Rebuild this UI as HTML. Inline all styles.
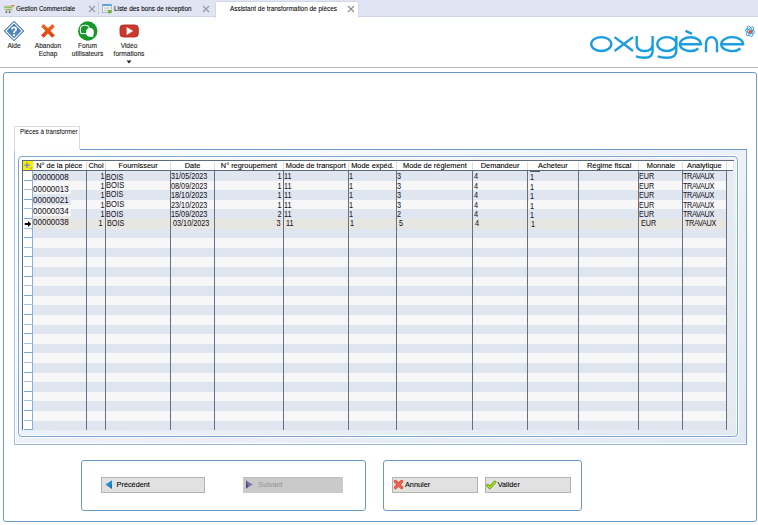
<!DOCTYPE html><html><head><meta charset="utf-8"><style>
html,body{margin:0;padding:0;}
body{width:758px;height:525px;overflow:hidden;position:relative;background:#fff;font-family:"Liberation Sans", sans-serif;color:#1a1a1a;}
div,span,svg{position:absolute;box-sizing:border-box;}
.t{white-space:nowrap;line-height:1;-webkit-text-stroke:0.1px currentColor;}
</style></head><body>
<div style="left:0px;top:0px;width:758px;height:17px;background:#e1e5f3;"></div>
<div style="left:0px;top:16px;width:758px;height:1px;background:#cdd4ea;"></div>
<div style="left:98px;top:2px;width:1px;height:13px;background:#c9cee0;"></div>
<svg style="left:0px;top:0px" width="16" height="16" viewBox="0 0 16 16"><path d="M4 6.2H12.6L11.6 10.6H5.4Z" fill="#e4e6ea" stroke="#a7abb3" stroke-width="0.7"/><path d="M5 7.3H11.6M5.6 9.3H11" stroke="#8cc43c" stroke-width="1.2"/><path d="M12.6 6.2L13 5.6" stroke="#a7abb3" stroke-width="0.7"/><path d="M11.6 5.6H14" stroke="#f47a1c" stroke-width="1.3" stroke-linecap="round"/><circle cx="6.4" cy="12.2" r="0.9" fill="#55585e"/><circle cx="9.6" cy="12.2" r="0.9" fill="#55585e"/></svg>
<span class="t" style="left:15.5px;top:4.8px;font-size:7.6px;transform:scaleX(0.81);transform-origin:left top;color:#000;-webkit-text-stroke:0.08px #000">Gestion Commerciale</span>
<svg style="left:88px;top:4.5px" width="8" height="8" viewBox="0 0 8 8"><path d="M1 1L7 7M7 1L1 7" stroke="#8a8a8a" stroke-width="1.1" opacity="0.85"/></svg>
<svg style="left:102px;top:4px" width="11" height="11" viewBox="0 0 11 11"><rect x="0.5" y="0.6" width="9" height="8" fill="#f6f2ea" stroke="#8fb0d4" stroke-width="0.8"/><rect x="0.5" y="0.4" width="9" height="1.5" fill="#3b9ae2"/><path d="M2 4H8M2 6.3H6" stroke="#a9adb5" stroke-width="0.7"/><circle cx="7.6" cy="7.6" r="1.8" fill="#62b61e"/></svg>
<span class="t" style="left:113.7px;top:4.8px;font-size:7.6px;transform:scaleX(0.835);transform-origin:left top;color:#000;-webkit-text-stroke:0.08px #000">Liste des bons de réception</span>
<svg style="left:202px;top:4.5px" width="8" height="8" viewBox="0 0 8 8"><path d="M1 1L7 7M7 1L1 7" stroke="#8a8a8a" stroke-width="1.1" opacity="0.85"/></svg>
<div style="left:215px;top:1px;width:144px;height:17px;background:#fff;border:1px solid #d3d8e8;border-bottom:none;border-radius:2px 2px 0 0;"></div>
<span class="t" style="left:230.3px;top:4.8px;font-size:7.6px;transform:scaleX(0.845);transform-origin:left top;color:#000;-webkit-text-stroke:0.08px #000">Assistant de transformation de pièces</span>
<svg style="left:347px;top:4.5px" width="8" height="8" viewBox="0 0 8 8"><path d="M1 1L7 7M7 1L1 7" stroke="#777" stroke-width="1.1" opacity="0.85"/></svg>
<div style="left:0px;top:67px;width:758px;height:1px;background:#b8b8b8;"></div>
<svg style="left:3px;top:20px" width="22" height="22" viewBox="0 0 22 22"><defs><linearGradient id="ag" x1="0" y1="0" x2="0" y2="1"><stop offset="0" stop-color="#3a74b8"/><stop offset="1" stop-color="#5b92cc"/></linearGradient></defs><path d="M11 1.2L20.8 11L11 20.8L1.2 11Z" fill="#3f78b8" stroke="#3a70ad" stroke-width="0.9" stroke-linejoin="round"/><path d="M11 2.9L19.1 11L11 19.1L2.9 11Z" fill="none" stroke="#fff" stroke-width="1.1"/><path d="M11 4.3L17.7 11L11 17.7L4.3 11Z" fill="url(#ag)"/><path d="M8.9 9.6Q8.9 7.4 11 7.4Q13.1 7.4 13.1 9.3Q13.1 10.4 12 11.1Q11 11.7 11 13.1" fill="none" stroke="#fff" stroke-width="1.8"/><rect x="10.1" y="14.2" width="1.9" height="1.9" fill="#fff"/></svg>
<span class="t" style="left:14px;top:42.5px;font-size:6.6px;;transform:translateX(-50%);transform-origin:center top">Aide</span>
<svg style="left:40px;top:23px" width="16" height="16" viewBox="0 0 16 16"><defs><linearGradient id="xg" x1="0" y1="0" x2="0" y2="1"><stop offset="0" stop-color="#f2641e"/><stop offset="1" stop-color="#e0400e"/></linearGradient></defs><path d="M2.4 2.3L13.5 13.5M13.5 2.3L2.4 13.5" stroke="url(#xg)" stroke-width="3.6" stroke-linecap="butt"/></svg>
<span class="t" style="left:48px;top:42.5px;font-size:6.6px;;transform:translateX(-50%);transform-origin:center top">Abandon</span>
<span class="t" style="left:48px;top:51.2px;font-size:6.6px;;transform:translateX(-50%);transform-origin:center top">Echap</span>
<svg style="left:77px;top:21px" width="21" height="21" viewBox="0 0 21 21"><circle cx="10.75" cy="10" r="9.7" fill="#15982a"/><path d="M4.2 12.3Q3.3 11.3 3.3 8.2Q3.3 4.3 7.9 4.3Q12.2 4.3 12.3 7.6" fill="none" stroke="#fff" stroke-width="1.1"/><path d="M3.6 12.6H9.4" stroke="#fff" stroke-width="1"/><ellipse cx="13" cy="11.4" rx="3.9" ry="4.3" fill="#fff"/><path d="M14.8 14.6L16.9 15.9L13 15.7Z" fill="#fff"/></svg>
<span class="t" style="left:87.5px;top:42.5px;font-size:6.6px;;transform:translateX(-50%);transform-origin:center top">Forum</span>
<span class="t" style="left:87.5px;top:51.2px;font-size:6.6px;;transform:translateX(-50%);transform-origin:center top">utilisateurs</span>
<svg style="left:119px;top:24px" width="20" height="14" viewBox="0 0 20 14"><rect x="1" y="1" width="18.3" height="12" rx="3.3" fill="#c83a2e" stroke="#b52a20" stroke-width="0.9"/><path d="M7.6 3L14.1 7L7.6 11Z" fill="#fff"/></svg>
<span class="t" style="left:129px;top:42.5px;font-size:6.6px;;transform:translateX(-50%);transform-origin:center top">Vidéo</span>
<span class="t" style="left:129px;top:51.2px;font-size:6.6px;;transform:translateX(-50%);transform-origin:center top">formations</span>
<svg style="left:126px;top:60px" width="6" height="4" viewBox="0 0 6 4"><path d="M0.5 0.5H5.5L3 3.5Z" fill="#222"/></svg>
<svg style="left:585px;top:25px" width="173" height="40" viewBox="585 25 173 40">
<g fill="none" stroke="#1b9de0" stroke-width="2.4">
<ellipse cx="601.25" cy="44.05" rx="10.05" ry="6.95"/>
<path d="M614.6 37.1L633 51M633 37.1L614.6 51"/>
<path d="M636.7 35.9V44Q636.7 51 644.65 51Q652.6 51 652.6 44V35.9M652.6 44V51Q652.6 57.7 644.65 57.7Q639.5 57.7 636 56.3"/>
<ellipse cx="666.8" cy="44.05" rx="9.5" ry="6.95"/>
<path d="M676.3 35.9V51Q676.3 57.7 667 57.7Q661 57.7 657.7 56.3"/>
<path d="M679.9 44.2H700.8A10.45 6.95 0 0 0 679.9 44.05A10.45 6.95 0 0 0 698.35 48.5"/>
<path d="M685.5 30.8L692 33.8"/>
<path d="M706 52.2V44A5.5 6.9 0 0 1 717 44V52.2"/>
<path d="M721.2 44.2H743.1A10.95 6.95 0 0 0 721.2 44.05A10.95 6.95 0 0 0 740.6 48.5"/>
</g>
<g fill="none" stroke="#3b9fe6" stroke-width="0.9">
<ellipse cx="750" cy="31.3" rx="5.6" ry="2.3" transform="rotate(70 750 31.3)"/>
<ellipse cx="750" cy="31.3" rx="5.4" ry="2.2" transform="rotate(125 750 31.3)"/>
<ellipse cx="750" cy="31.3" rx="4.8" ry="2.0" transform="rotate(15 750 31.3)"/>
</g>
<circle cx="750.4" cy="31.8" r="1.7" fill="#f54a10"/>
</svg>
<div style="left:3px;top:72px;width:754px;height:450px;border:1px solid #6b9bc9;border-radius:3px;"></div>
<div style="left:14px;top:126px;width:66px;height:25px;background:#fff;border:1px solid #dadada;border-bottom:none;"></div>
<span class="t" style="left:20.0px;top:127.6px;font-size:7.8px;transform:scaleX(0.8);transform-origin:left top;color:#000;-webkit-text-stroke:0.02px #000">Pièces à transformer</span>
<div style="left:14px;top:149px;width:733px;height:296px;border:1px solid #92b6da;border-left-color:#a3c1de;border-right-color:#7aa6d2;border-top:none;border-radius:0 2px 0 0;background:linear-gradient(to bottom right,#ffffff 0%,#eef2f8 45%,#e2e9f3 100%);box-shadow:inset 1px 0 0 #fff, inset 0 -1px 0 #fff;"></div>
<div style="left:80px;top:149px;width:667px;height:1px;background:#6b9bc9;"></div>
<div style="left:14px;top:149px;width:1px;height:2px;background:#d6d9de;"></div>
<div style="left:18px;top:156px;width:720px;height:281px;border:1px solid #7aa6d2;border-radius:4px;background:transparent;box-shadow:0 0 0 1px rgba(255,255,255,0.9), inset 0 0 0 1px rgba(255,255,255,0.9);"></div>
<div style="left:22px;top:160px;width:712px;height:271px;background:#e8ebf0;"></div>
<div style="left:22px;top:160px;width:711px;height:11px;background:#fff;"></div>
<div style="left:22px;top:160px;width:712px;height:1px;background:#5d6c7c;"></div>
<div style="left:22px;top:160px;width:1px;height:270px;background:#5d6c7c;"></div>
<div style="left:22px;top:170px;width:711px;height:1px;background:#5d6c7c;"></div>
<div style="left:23px;top:161px;width:10px;height:9px;background:#f5f000;"></div>
<svg style="left:23px;top:161px" width="10" height="9" viewBox="0 0 10 9"><path d="M4 1.5V7M1.3 4.2H6.7" stroke="#8a90b8" stroke-width="1.6"/><path d="M7 6.5L8 7.6L9 6.5" stroke="#6a70a0" stroke-width="0.8" fill="none"/></svg>
<div style="left:33px;top:171px;width:700px;height:10px;background:#e0e6ef;"></div>
<div style="left:33px;top:181px;width:700px;height:9px;background:#f8f7f7;"></div>
<div style="left:33px;top:190px;width:700px;height:10px;background:#e0e6ef;"></div>
<div style="left:33px;top:200px;width:700px;height:9px;background:#f8f7f7;"></div>
<div style="left:33px;top:209px;width:700px;height:10px;background:#e0e6ef;"></div>
<div style="left:33px;top:219px;width:700px;height:10px;background:#e8e6e1;"></div>
<div style="left:33px;top:229px;width:700px;height:9px;background:#e0e6ef;"></div>
<div style="left:33px;top:238px;width:700px;height:10px;background:#f8f7f7;"></div>
<div style="left:33px;top:248px;width:700px;height:9px;background:#e0e6ef;"></div>
<div style="left:33px;top:257px;width:700px;height:10px;background:#f8f7f7;"></div>
<div style="left:33px;top:267px;width:700px;height:10px;background:#e0e6ef;"></div>
<div style="left:33px;top:277px;width:700px;height:9px;background:#f8f7f7;"></div>
<div style="left:33px;top:286px;width:700px;height:10px;background:#e0e6ef;"></div>
<div style="left:33px;top:296px;width:700px;height:9px;background:#f8f7f7;"></div>
<div style="left:33px;top:305px;width:700px;height:10px;background:#e0e6ef;"></div>
<div style="left:33px;top:315px;width:700px;height:10px;background:#f8f7f7;"></div>
<div style="left:33px;top:325px;width:700px;height:9px;background:#e0e6ef;"></div>
<div style="left:33px;top:334px;width:700px;height:10px;background:#f8f7f7;"></div>
<div style="left:33px;top:344px;width:700px;height:9px;background:#e0e6ef;"></div>
<div style="left:33px;top:353px;width:700px;height:10px;background:#f8f7f7;"></div>
<div style="left:33px;top:363px;width:700px;height:10px;background:#e0e6ef;"></div>
<div style="left:33px;top:373px;width:700px;height:9px;background:#f8f7f7;"></div>
<div style="left:33px;top:382px;width:700px;height:10px;background:#e0e6ef;"></div>
<div style="left:33px;top:392px;width:700px;height:9px;background:#f8f7f7;"></div>
<div style="left:33px;top:401px;width:700px;height:10px;background:#e0e6ef;"></div>
<div style="left:33px;top:411px;width:700px;height:10px;background:#f8f7f7;"></div>
<div style="left:33px;top:421px;width:700px;height:9px;background:#e0e6ef;"></div>
<div style="left:23px;top:171px;width:10px;height:259px;background:#fff;"></div>
<div style="left:24px;top:180px;width:9px;height:1px;background:#7aa6d3;"></div>
<div style="left:24px;top:189px;width:9px;height:1px;background:#a3c0de;"></div>
<div style="left:24px;top:199px;width:9px;height:1px;background:#7aa6d3;"></div>
<div style="left:24px;top:208px;width:9px;height:1px;background:#a3c0de;"></div>
<div style="left:24px;top:218px;width:9px;height:1px;background:#7aa6d3;"></div>
<div style="left:24px;top:228px;width:9px;height:1px;background:#a3c0de;"></div>
<div style="left:24px;top:237px;width:9px;height:1px;background:#7aa6d3;"></div>
<div style="left:24px;top:247px;width:9px;height:1px;background:#a3c0de;"></div>
<div style="left:24px;top:256px;width:9px;height:1px;background:#7aa6d3;"></div>
<div style="left:24px;top:266px;width:9px;height:1px;background:#a3c0de;"></div>
<div style="left:24px;top:276px;width:9px;height:1px;background:#7aa6d3;"></div>
<div style="left:24px;top:285px;width:9px;height:1px;background:#a3c0de;"></div>
<div style="left:24px;top:295px;width:9px;height:1px;background:#7aa6d3;"></div>
<div style="left:24px;top:304px;width:9px;height:1px;background:#a3c0de;"></div>
<div style="left:24px;top:314px;width:9px;height:1px;background:#7aa6d3;"></div>
<div style="left:24px;top:324px;width:9px;height:1px;background:#a3c0de;"></div>
<div style="left:24px;top:333px;width:9px;height:1px;background:#7aa6d3;"></div>
<div style="left:24px;top:343px;width:9px;height:1px;background:#a3c0de;"></div>
<div style="left:24px;top:352px;width:9px;height:1px;background:#7aa6d3;"></div>
<div style="left:24px;top:362px;width:9px;height:1px;background:#a3c0de;"></div>
<div style="left:24px;top:372px;width:9px;height:1px;background:#7aa6d3;"></div>
<div style="left:24px;top:381px;width:9px;height:1px;background:#a3c0de;"></div>
<div style="left:24px;top:391px;width:9px;height:1px;background:#7aa6d3;"></div>
<div style="left:24px;top:400px;width:9px;height:1px;background:#a3c0de;"></div>
<div style="left:24px;top:410px;width:9px;height:1px;background:#7aa6d3;"></div>
<div style="left:24px;top:420px;width:9px;height:1px;background:#a3c0de;"></div>
<div style="left:24px;top:429px;width:9px;height:1px;background:#7aa6d3;"></div>
<div style="left:32px;top:171px;width:1px;height:259px;background:#8cb1d9;"></div>
<svg style="left:23px;top:219px" width="10" height="10" viewBox="0 0 10 10"><path d="M1.8 4H5V2L8.3 5L5 8V6H1.8Z" fill="#000"/></svg>
<div style="left:86px;top:171px;width:1px;height:259px;background:#627282;"></div>
<div style="left:86px;top:162px;width:1px;height:8px;background:#dadde2;"></div>
<div style="left:105px;top:171px;width:1px;height:259px;background:#627282;"></div>
<div style="left:105px;top:162px;width:1px;height:8px;background:#dadde2;"></div>
<div style="left:170px;top:171px;width:1px;height:259px;background:#627282;"></div>
<div style="left:170px;top:162px;width:1px;height:8px;background:#dadde2;"></div>
<div style="left:214px;top:171px;width:1px;height:259px;background:#627282;"></div>
<div style="left:214px;top:162px;width:1px;height:8px;background:#dadde2;"></div>
<div style="left:283px;top:171px;width:1px;height:259px;background:#627282;"></div>
<div style="left:283px;top:162px;width:1px;height:8px;background:#dadde2;"></div>
<div style="left:348px;top:171px;width:1px;height:259px;background:#627282;"></div>
<div style="left:348px;top:162px;width:1px;height:8px;background:#dadde2;"></div>
<div style="left:396px;top:171px;width:1px;height:259px;background:#627282;"></div>
<div style="left:396px;top:162px;width:1px;height:8px;background:#dadde2;"></div>
<div style="left:472px;top:171px;width:1px;height:259px;background:#627282;"></div>
<div style="left:472px;top:162px;width:1px;height:8px;background:#dadde2;"></div>
<div style="left:527px;top:171px;width:1px;height:259px;background:#627282;"></div>
<div style="left:527px;top:162px;width:1px;height:8px;background:#dadde2;"></div>
<div style="left:578px;top:171px;width:1px;height:259px;background:#627282;"></div>
<div style="left:578px;top:162px;width:1px;height:8px;background:#dadde2;"></div>
<div style="left:638px;top:171px;width:1px;height:259px;background:#627282;"></div>
<div style="left:638px;top:162px;width:1px;height:8px;background:#dadde2;"></div>
<div style="left:682px;top:171px;width:1px;height:259px;background:#627282;"></div>
<div style="left:682px;top:162px;width:1px;height:8px;background:#dadde2;"></div>
<div style="left:726px;top:171px;width:1px;height:259px;background:#627282;"></div>
<div style="left:726px;top:162px;width:1px;height:8px;background:#dadde2;"></div>
<div style="left:727px;top:171px;width:6px;height:259px;background:#e6eaf1;"></div>
<span class="t" style="left:59.3px;top:162.3px;font-size:7.4px;color:#000;transform:translateX(-50%);transform-origin:center top">N° de la pièce</span>
<span class="t" style="left:96px;top:162.3px;font-size:7.4px;color:#000;transform:translateX(-50%);transform-origin:center top">Choi</span>
<span class="t" style="left:138.1px;top:162.3px;font-size:7.4px;color:#000;transform:translateX(-50%);transform-origin:center top">Fournisseur</span>
<span class="t" style="left:192.5px;top:162.3px;font-size:7.4px;color:#000;transform:translateX(-50%);transform-origin:center top">Date</span>
<span class="t" style="left:249px;top:162.3px;font-size:7.4px;color:#000;transform:translateX(-50%);transform-origin:center top">N° regroupement</span>
<span class="t" style="left:315.8px;top:162.3px;font-size:7.4px;color:#000;transform:translateX(-50%);transform-origin:center top">Mode de transport</span>
<span class="t" style="left:372.5px;top:162.3px;font-size:7.4px;color:#000;transform:translateX(-50%);transform-origin:center top">Mode expéd.</span>
<span class="t" style="left:434.9px;top:162.3px;font-size:7.4px;color:#000;transform:translateX(-50%);transform-origin:center top">Mode de règlement</span>
<span class="t" style="left:500.1px;top:162.3px;font-size:7.4px;color:#000;transform:translateX(-50%);transform-origin:center top">Demandeur</span>
<span class="t" style="left:552.9px;top:162.3px;font-size:7.4px;color:#000;transform:translateX(-50%);transform-origin:center top">Acheteur</span>
<span class="t" style="left:609.2px;top:162.3px;font-size:7.4px;color:#000;transform:translateX(-50%);transform-origin:center top">Régime fiscal</span>
<span class="t" style="left:661px;top:162.3px;font-size:7.4px;color:#000;transform:translateX(-50%);transform-origin:center top">Monnaie</span>
<span class="t" style="left:704.3px;top:162.3px;font-size:7.4px;color:#000;transform:translateX(-50%);transform-origin:center top">Analytique</span>
<div style="left:33px;top:182px;width:38px;height:12px;background:#f8f7f7;"></div>
<div style="left:33px;top:194px;width:38px;height:11px;background:#e0e6ef;"></div>
<div style="left:33px;top:205px;width:38px;height:11px;background:#f8f7f7;"></div>
<div style="left:33px;top:216px;width:38px;height:11px;background:#e8e6e1;"></div>
<span class="t" style="left:33.2px;top:172.23px;font-size:9.8px;color:#1a1424;-webkit-text-stroke:0.05px currentColor;transform:scaleX(0.82);transform-origin:left top;">00000008</span>
<span class="t" style="left:33.2px;top:184.03px;font-size:9.8px;color:#1a1424;-webkit-text-stroke:0.05px currentColor;transform:scaleX(0.82);transform-origin:left top;">00000013</span>
<span class="t" style="left:33.2px;top:194.63px;font-size:9.8px;color:#1a1424;-webkit-text-stroke:0.05px currentColor;transform:scaleX(0.82);transform-origin:left top;">00000021</span>
<span class="t" style="left:33.2px;top:206.13px;font-size:9.8px;color:#1a1424;-webkit-text-stroke:0.05px currentColor;transform:scaleX(0.82);transform-origin:left top;">00000034</span>
<span class="t" style="left:33.2px;top:217.13px;font-size:9.8px;color:#1a1424;-webkit-text-stroke:0.05px currentColor;transform:scaleX(0.82);transform-origin:left top;">00000038</span>
<span class="t" style="right:653.4px;top:172.26px;font-size:8.4px;color:#1a1424;-webkit-text-stroke:0.05px currentColor;transform:scaleX(0.87);transform-origin:right top;">1</span>
<span class="t" style="left:106.3px;top:172.76px;font-size:8.4px;color:#1a1424;-webkit-text-stroke:0.05px currentColor;transform:scaleX(0.86);transform-origin:left top;">BOIS</span>
<span class="t" style="left:171px;top:172.26px;font-size:8.4px;color:#1a1424;-webkit-text-stroke:0.05px currentColor;transform:scaleX(0.868);transform-origin:left top;">31/05/2023</span>
<span class="t" style="right:476.0px;top:172.26px;font-size:8.4px;color:#1a1424;-webkit-text-stroke:0.05px currentColor;transform:scaleX(0.87);transform-origin:right top;">1</span>
<span class="t" style="left:284.0px;top:172.26px;font-size:8.4px;color:#1a1424;-webkit-text-stroke:0.05px currentColor;transform:scaleX(0.87);transform-origin:left top;">11</span>
<span class="t" style="left:348.6px;top:172.26px;font-size:8.4px;color:#1a1424;-webkit-text-stroke:0.05px currentColor;transform:scaleX(0.87);transform-origin:left top;">1</span>
<span class="t" style="left:397.4px;top:172.26px;font-size:8.4px;color:#1a1424;-webkit-text-stroke:0.05px currentColor;transform:scaleX(0.87);transform-origin:left top;">3</span>
<span class="t" style="left:473.6px;top:172.26px;font-size:8.4px;color:#1a1424;-webkit-text-stroke:0.05px currentColor;transform:scaleX(0.87);transform-origin:left top;">4</span>
<span class="t" style="left:529.6px;top:173.06px;font-size:8.4px;color:#1a1424;-webkit-text-stroke:0.05px currentColor;transform:scaleX(0.87);transform-origin:left top;">1</span>
<span class="t" style="left:639px;top:172.26px;font-size:8.4px;color:#1a1424;-webkit-text-stroke:0.05px currentColor;transform:scaleX(0.86);transform-origin:left top;">EUR</span>
<span class="t" style="left:683px;top:172.26px;font-size:8.4px;color:#1a1424;-webkit-text-stroke:0.05px currentColor;transform:scaleX(0.87);transform-origin:left top;letter-spacing:-0.4px;">TRAVAUX</span>
<span class="t" style="right:653.4px;top:181.96px;font-size:8.4px;color:#1a1424;-webkit-text-stroke:0.05px currentColor;transform:scaleX(0.87);transform-origin:right top;">1</span>
<span class="t" style="left:106.3px;top:180.96px;font-size:9.0px;color:#1a1424;-webkit-text-stroke:0.05px currentColor;transform:scaleX(0.85);transform-origin:left top;">BOIS</span>
<span class="t" style="left:171px;top:181.96px;font-size:8.4px;color:#1a1424;-webkit-text-stroke:0.05px currentColor;transform:scaleX(0.868);transform-origin:left top;">08/09/2023</span>
<span class="t" style="right:476.0px;top:181.96px;font-size:8.4px;color:#1a1424;-webkit-text-stroke:0.05px currentColor;transform:scaleX(0.87);transform-origin:right top;">1</span>
<span class="t" style="left:284.0px;top:181.96px;font-size:8.4px;color:#1a1424;-webkit-text-stroke:0.05px currentColor;transform:scaleX(0.87);transform-origin:left top;">11</span>
<span class="t" style="left:348.6px;top:181.96px;font-size:8.4px;color:#1a1424;-webkit-text-stroke:0.05px currentColor;transform:scaleX(0.87);transform-origin:left top;">1</span>
<span class="t" style="left:397.4px;top:181.96px;font-size:8.4px;color:#1a1424;-webkit-text-stroke:0.05px currentColor;transform:scaleX(0.87);transform-origin:left top;">3</span>
<span class="t" style="left:473.6px;top:181.96px;font-size:8.4px;color:#1a1424;-webkit-text-stroke:0.05px currentColor;transform:scaleX(0.87);transform-origin:left top;">4</span>
<span class="t" style="left:529.6px;top:182.76px;font-size:8.4px;color:#1a1424;-webkit-text-stroke:0.05px currentColor;transform:scaleX(0.87);transform-origin:left top;">1</span>
<span class="t" style="left:639px;top:181.96px;font-size:8.4px;color:#1a1424;-webkit-text-stroke:0.05px currentColor;transform:scaleX(0.86);transform-origin:left top;">EUR</span>
<span class="t" style="left:683px;top:181.96px;font-size:8.4px;color:#1a1424;-webkit-text-stroke:0.05px currentColor;transform:scaleX(0.87);transform-origin:left top;letter-spacing:-0.4px;">TRAVAUX</span>
<span class="t" style="right:653.4px;top:191.46px;font-size:8.4px;color:#1a1424;-webkit-text-stroke:0.05px currentColor;transform:scaleX(0.87);transform-origin:right top;">1</span>
<span class="t" style="left:106.3px;top:190.46px;font-size:8.4px;color:#1a1424;-webkit-text-stroke:0.05px currentColor;transform:scaleX(0.86);transform-origin:left top;">BOIS</span>
<span class="t" style="left:171px;top:191.46px;font-size:8.4px;color:#1a1424;-webkit-text-stroke:0.05px currentColor;transform:scaleX(0.868);transform-origin:left top;">18/10/2023</span>
<span class="t" style="right:476.0px;top:191.46px;font-size:8.4px;color:#1a1424;-webkit-text-stroke:0.05px currentColor;transform:scaleX(0.87);transform-origin:right top;">1</span>
<span class="t" style="left:284.0px;top:191.46px;font-size:8.4px;color:#1a1424;-webkit-text-stroke:0.05px currentColor;transform:scaleX(0.87);transform-origin:left top;">11</span>
<span class="t" style="left:348.6px;top:191.46px;font-size:8.4px;color:#1a1424;-webkit-text-stroke:0.05px currentColor;transform:scaleX(0.87);transform-origin:left top;">1</span>
<span class="t" style="left:397.4px;top:191.46px;font-size:8.4px;color:#1a1424;-webkit-text-stroke:0.05px currentColor;transform:scaleX(0.87);transform-origin:left top;">3</span>
<span class="t" style="left:473.6px;top:191.46px;font-size:8.4px;color:#1a1424;-webkit-text-stroke:0.05px currentColor;transform:scaleX(0.87);transform-origin:left top;">4</span>
<span class="t" style="left:529.6px;top:192.26px;font-size:8.4px;color:#1a1424;-webkit-text-stroke:0.05px currentColor;transform:scaleX(0.87);transform-origin:left top;">1</span>
<span class="t" style="left:639px;top:191.46px;font-size:8.4px;color:#1a1424;-webkit-text-stroke:0.05px currentColor;transform:scaleX(0.86);transform-origin:left top;">EUR</span>
<span class="t" style="left:683px;top:191.46px;font-size:8.4px;color:#1a1424;-webkit-text-stroke:0.05px currentColor;transform:scaleX(0.87);transform-origin:left top;letter-spacing:-0.4px;">TRAVAUX</span>
<span class="t" style="right:653.4px;top:200.96px;font-size:8.4px;color:#1a1424;-webkit-text-stroke:0.05px currentColor;transform:scaleX(0.87);transform-origin:right top;">1</span>
<span class="t" style="left:106.3px;top:199.76px;font-size:9.0px;color:#1a1424;-webkit-text-stroke:0.05px currentColor;transform:scaleX(0.85);transform-origin:left top;">BOIS</span>
<span class="t" style="left:171px;top:200.96px;font-size:8.4px;color:#1a1424;-webkit-text-stroke:0.05px currentColor;transform:scaleX(0.868);transform-origin:left top;">23/10/2023</span>
<span class="t" style="right:476.0px;top:200.96px;font-size:8.4px;color:#1a1424;-webkit-text-stroke:0.05px currentColor;transform:scaleX(0.87);transform-origin:right top;">1</span>
<span class="t" style="left:284.0px;top:200.96px;font-size:8.4px;color:#1a1424;-webkit-text-stroke:0.05px currentColor;transform:scaleX(0.87);transform-origin:left top;">11</span>
<span class="t" style="left:348.6px;top:200.96px;font-size:8.4px;color:#1a1424;-webkit-text-stroke:0.05px currentColor;transform:scaleX(0.87);transform-origin:left top;">1</span>
<span class="t" style="left:397.4px;top:200.96px;font-size:8.4px;color:#1a1424;-webkit-text-stroke:0.05px currentColor;transform:scaleX(0.87);transform-origin:left top;">3</span>
<span class="t" style="left:473.6px;top:200.96px;font-size:8.4px;color:#1a1424;-webkit-text-stroke:0.05px currentColor;transform:scaleX(0.87);transform-origin:left top;">4</span>
<span class="t" style="left:529.6px;top:201.76px;font-size:8.4px;color:#1a1424;-webkit-text-stroke:0.05px currentColor;transform:scaleX(0.87);transform-origin:left top;">1</span>
<span class="t" style="left:639px;top:200.96px;font-size:8.4px;color:#1a1424;-webkit-text-stroke:0.05px currentColor;transform:scaleX(0.86);transform-origin:left top;">EUR</span>
<span class="t" style="left:683px;top:200.96px;font-size:8.4px;color:#1a1424;-webkit-text-stroke:0.05px currentColor;transform:scaleX(0.87);transform-origin:left top;letter-spacing:-0.4px;">TRAVAUX</span>
<span class="t" style="right:653.4px;top:210.36px;font-size:8.4px;color:#1a1424;-webkit-text-stroke:0.05px currentColor;transform:scaleX(0.87);transform-origin:right top;">1</span>
<span class="t" style="left:106.3px;top:209.96px;font-size:8.4px;color:#1a1424;-webkit-text-stroke:0.05px currentColor;transform:scaleX(0.86);transform-origin:left top;">BOIS</span>
<span class="t" style="left:171px;top:210.36px;font-size:8.4px;color:#1a1424;-webkit-text-stroke:0.05px currentColor;transform:scaleX(0.868);transform-origin:left top;">15/09/2023</span>
<span class="t" style="right:476.0px;top:210.36px;font-size:8.4px;color:#1a1424;-webkit-text-stroke:0.05px currentColor;transform:scaleX(0.87);transform-origin:right top;">2</span>
<span class="t" style="left:284.0px;top:210.36px;font-size:8.4px;color:#1a1424;-webkit-text-stroke:0.05px currentColor;transform:scaleX(0.87);transform-origin:left top;">11</span>
<span class="t" style="left:348.6px;top:210.36px;font-size:8.4px;color:#1a1424;-webkit-text-stroke:0.05px currentColor;transform:scaleX(0.87);transform-origin:left top;">1</span>
<span class="t" style="left:397.4px;top:210.36px;font-size:8.4px;color:#1a1424;-webkit-text-stroke:0.05px currentColor;transform:scaleX(0.87);transform-origin:left top;">2</span>
<span class="t" style="left:473.6px;top:210.36px;font-size:8.4px;color:#1a1424;-webkit-text-stroke:0.05px currentColor;transform:scaleX(0.87);transform-origin:left top;">4</span>
<span class="t" style="left:529.6px;top:211.16px;font-size:8.4px;color:#1a1424;-webkit-text-stroke:0.05px currentColor;transform:scaleX(0.87);transform-origin:left top;">1</span>
<span class="t" style="left:639px;top:210.36px;font-size:8.4px;color:#1a1424;-webkit-text-stroke:0.05px currentColor;transform:scaleX(0.86);transform-origin:left top;">EUR</span>
<span class="t" style="left:683px;top:210.36px;font-size:8.4px;color:#1a1424;-webkit-text-stroke:0.05px currentColor;transform:scaleX(0.87);transform-origin:left top;letter-spacing:-0.4px;">TRAVAUX</span>
<span class="t" style="right:655.1px;top:219.46px;font-size:8.4px;color:#1a1424;-webkit-text-stroke:0.05px currentColor;transform:scaleX(0.87);transform-origin:right top;">1</span>
<span class="t" style="left:106.98px;top:218.86px;font-size:8.4px;color:#1a1424;-webkit-text-stroke:0.05px currentColor;transform:scaleX(0.86);transform-origin:left top;">BOIS</span>
<span class="t" style="left:172.7px;top:219.46px;font-size:8.4px;color:#1a1424;-webkit-text-stroke:0.05px currentColor;transform:scaleX(0.868);transform-origin:left top;">03/10/2023</span>
<span class="t" style="right:477.7px;top:219.46px;font-size:8.4px;color:#1a1424;-webkit-text-stroke:0.05px currentColor;transform:scaleX(0.87);transform-origin:right top;">3</span>
<span class="t" style="left:285.7px;top:219.46px;font-size:8.4px;color:#1a1424;-webkit-text-stroke:0.05px currentColor;transform:scaleX(0.87);transform-origin:left top;">11</span>
<span class="t" style="left:350.3px;top:219.46px;font-size:8.4px;color:#1a1424;-webkit-text-stroke:0.05px currentColor;transform:scaleX(0.87);transform-origin:left top;">1</span>
<span class="t" style="left:399.09999999999997px;top:219.46px;font-size:8.4px;color:#1a1424;-webkit-text-stroke:0.05px currentColor;transform:scaleX(0.87);transform-origin:left top;">5</span>
<span class="t" style="left:475.3px;top:219.46px;font-size:8.4px;color:#1a1424;-webkit-text-stroke:0.05px currentColor;transform:scaleX(0.87);transform-origin:left top;">4</span>
<span class="t" style="left:531.3000000000001px;top:220.26px;font-size:8.4px;color:#1a1424;-webkit-text-stroke:0.05px currentColor;transform:scaleX(0.87);transform-origin:left top;">1</span>
<span class="t" style="left:640.7px;top:219.46px;font-size:8.4px;color:#1a1424;-webkit-text-stroke:0.05px currentColor;transform:scaleX(0.86);transform-origin:left top;">EUR</span>
<span class="t" style="left:684.7px;top:219.46px;font-size:8.4px;color:#1a1424;-webkit-text-stroke:0.05px currentColor;transform:scaleX(0.87);transform-origin:left top;letter-spacing:-0.4px;">TRAVAUX</span>
<div style="left:530px;top:171px;width:10px;height:1px;background:#4a5a6a;"></div>
<div style="left:81px;top:460px;width:285px;height:51px;border:1px solid #6a9bc7;border-radius:3px;"></div>
<div style="left:383px;top:460px;width:199px;height:51px;border:1px solid #6a9bc7;border-radius:3px;"></div>
<div style="left:101px;top:477px;width:104px;height:16px;background:#e1e1e1;border:1px solid #b3b3b3;"></div>
<svg style="left:105px;top:480px" width="8" height="10" viewBox="0 0 8 10"><defs><linearGradient id="pg" x1="0" y1="0" x2="1" y2="1"><stop offset="0" stop-color="#3cb4ec"/><stop offset="1" stop-color="#1466b4"/></linearGradient></defs><path d="M7 0.3V8.9L0.3 4.6Z" fill="url(#pg)"/><path d="M7 8.9L0.3 4.6L7.3 9.4Z" fill="#7a8088" opacity="0.6"/></svg>
<span class="t" style="left:116.6px;top:480.6px;font-size:7.3px;color:#000;-webkit-text-stroke:0.08px #000">Précédent</span>
<div style="left:243px;top:477px;width:100px;height:16px;background:#cacaca;border-top:1px solid #bdbdbd;"></div>
<svg style="left:245px;top:480px" width="9" height="10" viewBox="0 0 9 10"><path d="M1 0.3V8.6L7.7 4.5Z" fill="#7c77aa"/><path d="M1 0.3V8.6L3.5 6.8Z" fill="#4f4a7e"/></svg>
<span class="t" style="left:258.3px;top:480.6px;font-size:7.3px;color:#9a9a9a">Suivant</span>
<div style="left:392px;top:477px;width:86px;height:16px;background:#e1e1e1;border:1px solid #b3b3b3;"></div>
<svg style="left:393px;top:479px" width="11" height="11" viewBox="0 0 11 11"><path d="M2.4 2.4L8.7 8.7M8.7 2.4L2.4 8.7" stroke="#d9442e" stroke-width="3.1" stroke-linecap="round"/><path d="M2.4 2.4L8.7 8.7M8.7 2.4L2.4 8.7" stroke="#f26350" stroke-width="2" stroke-linecap="round"/></svg>
<span class="t" style="left:405px;top:480.6px;font-size:7.3px;color:#000;-webkit-text-stroke:0.08px #000">Annuler</span>
<div style="left:485px;top:477px;width:86px;height:16px;background:#e1e1e1;border:1px solid #b3b3b3;"></div>
<svg style="left:486px;top:480px" width="11" height="10" viewBox="0 0 11 10"><path d="M1.6 5.4L3.9 7.6L8.9 2.1" stroke="#5f9e12" stroke-width="3" fill="none" stroke-linecap="round" stroke-linejoin="round"/><path d="M1.6 5.4L3.9 7.6L8.9 2.1" stroke="#a6d61e" stroke-width="1.7" fill="none" stroke-linecap="round" stroke-linejoin="round"/></svg>
<span class="t" style="left:497.7px;top:480.6px;font-size:7.3px;color:#000;-webkit-text-stroke:0.08px #000">Valider</span>
</body></html>
